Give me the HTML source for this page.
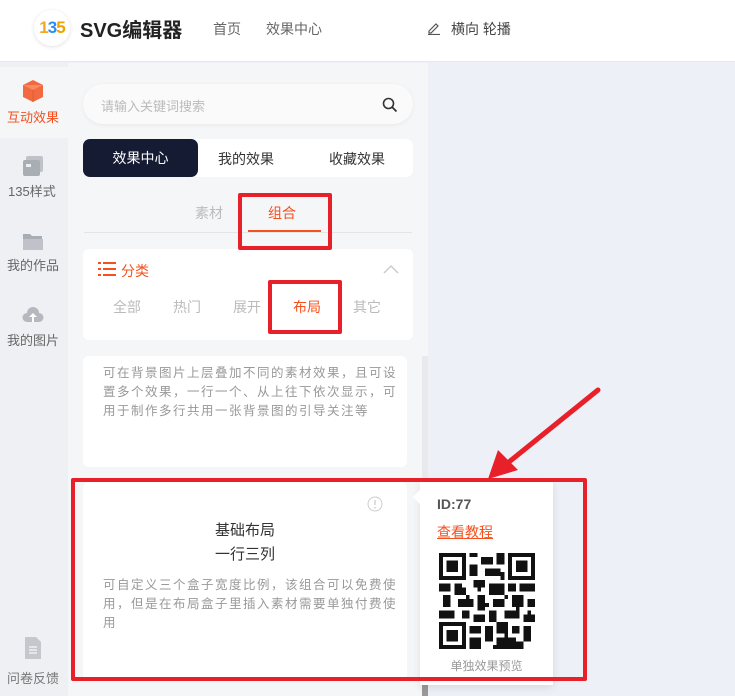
<!DOCTYPE html>
<html><head><meta charset="utf-8"><style>
*{margin:0;padding:0;box-sizing:border-box}
body{width:735px;height:696px;overflow:hidden;font-family:"Liberation Sans","Noto Sans CJK SC",sans-serif;background:#edf0f6;position:relative}
.a{position:absolute}
.d{font-size:12.5px;line-height:19px;color:#999;letter-spacing:1.5px;width:300px}
</style></head><body>
<!-- header -->
<div class="a" style="left:0;top:0;width:735px;height:62px;background:#fff;border-bottom:1px solid #e6e9ef"></div>
<div class="a" style="left:34px;top:10px;width:36px;height:36px;border-radius:50%;background:#fff;box-shadow:0 1px 4px rgba(0,0,0,.12);font:bold 17px 'Liberation Sans',sans-serif;text-align:center;line-height:36px;letter-spacing:-1px"><span style="color:#f5a623">1</span><span style="color:#2c8df0">3</span><span style="color:#f0a300">5</span></div>
<div class="a" style="left:80px;top:14px;font-size:20px;font-weight:bold;color:#222">SVG编辑器</div>
<div class="a" style="left:213px;top:19px;font-size:14px;color:#666">首页</div>
<div class="a" style="left:266px;top:19px;font-size:14px;color:#666">效果中心</div>
<svg class="a" style="left:427px;top:21px" width="14" height="14" viewBox="0 0 14 14"><path d="M2 10 L9 3 L11 5 L4 12 L2 12Z" fill="none" stroke="#555" stroke-width="1.2"/><path d="M1 13.5H13" stroke="#555" stroke-width="1.2"/></svg>
<div class="a" style="left:451px;top:19px;font-size:14px;color:#444">横向 轮播</div>
<!-- sidebar -->
<div class="a" style="left:0;top:63px;width:68px;height:633px;background:#eef0f3"></div>
<div class="a" style="left:0;top:67px;width:68px;height:71px;background:#f5f6f8"></div>
<svg class="a" style="left:22px;top:79px" width="22" height="24" viewBox="0 0 22 24"><path d="M11 1L21 6V18L11 23L1 18V6Z" fill="#f26a3f"/><path d="M1 6L11 11L21 6" fill="#fa8a5f"/><path d="M11 11V23" stroke="#e05a30"/></svg>
<div class="a" style="left:7px;top:107px;font-size:13px;color:#f4511e">互动效果</div>
<svg class="a" style="left:22px;top:155px" width="22" height="22"><rect x="4" y="1" width="17" height="16" rx="2" fill="#bfc3c9"/><rect x="1" y="5" width="17" height="16" rx="2" fill="#a9adb4"/><rect x="4" y="9" width="5" height="3" fill="#eee"/></svg>
<div class="a" style="left:8px;top:181px;font-size:13px;color:#666">135样式</div>
<svg class="a" style="left:22px;top:231px" width="22" height="20"><path d="M1 3h7l2 2h10v14H1Z" fill="#a9adb4"/><path d="M1 8h20v11H1Z" fill="#bfc3c9"/></svg>
<div class="a" style="left:7px;top:255px;font-size:13px;color:#666">我的作品</div>
<svg class="a" style="left:22px;top:306px" width="22" height="18"><path d="M5 16a4.5 4.5 0 0 1 0-9 6 6 0 0 1 12 0 4.5 4.5 0 0 1 0 9Z" fill="#b5b9bf"/><path d="M11 7l-4 4h3v5h2v-5h3Z" fill="#fff"/></svg>
<div class="a" style="left:7px;top:330px;font-size:13px;color:#666">我的图片</div>
<svg class="a" style="left:23px;top:636px" width="20" height="24"><path d="M2 1h11l5 5v17H2Z" fill="#c4c7cc"/><path d="M6 11h8M6 14h8M6 17h8" stroke="#eef0f3" stroke-width="1.5"/></svg>
<div class="a" style="left:7px;top:668px;font-size:13px;color:#777">问卷反馈</div>
<!-- middle -->
<div class="a" style="left:68px;top:63px;width:360px;height:633px;background:#f5f6f8"></div>
<div class="a" style="left:83px;top:84px;width:330px;height:40px;border-radius:20px;background:#fafafb;box-shadow:0 1px 4px rgba(0,0,0,.06)"></div>
<div class="a" style="left:101px;top:96px;font-size:13px;color:#bbb">请输入关键词搜索</div>
<svg class="a" style="left:382px;top:97px" width="16" height="16"><circle cx="6.5" cy="6.5" r="5" fill="none" stroke="#333" stroke-width="1.6"/><path d="M10 10l4.5 4.5" stroke="#333" stroke-width="1.8"/></svg>
<div class="a" style="left:83px;top:139px;width:330px;height:38px;border-radius:7px;background:#fff"></div>
<div class="a" style="left:83px;top:139px;width:115px;height:38px;border-radius:7px;background:#151b33;color:#fff;font-size:14px;text-align:center;line-height:38px">效果中心</div>
<div class="a" style="left:218px;top:149px;font-size:14px;color:#333">我的效果</div>
<div class="a" style="left:329px;top:149px;font-size:14px;color:#333">收藏效果</div>
<div class="a" style="left:195px;top:203px;font-size:14px;color:#bbb">素材</div>
<div class="a" style="left:268px;top:203px;font-size:14px;color:#f4511e">组合</div>
<div class="a" style="left:84px;top:232px;width:328px;height:1px;background:#e3e5e9"></div>
<div class="a" style="left:248px;top:230px;width:73px;height:2px;background:#f4511e"></div>
<div class="a" style="left:83px;top:249px;width:330px;height:91px;border-radius:6px;background:#fff"></div>
<svg class="a" style="left:98px;top:262px" width="18" height="14"><g fill="#f4511e"><rect x="0" y="0" width="3" height="2"/><rect x="5" y="0" width="13" height="2"/><rect x="0" y="6" width="3" height="2"/><rect x="5" y="6" width="13" height="2"/><rect x="0" y="12" width="3" height="2"/><rect x="5" y="12" width="13" height="2"/></g></svg>
<div class="a" style="left:121px;top:261px;font-size:14px;color:#f4511e">分类</div>
<svg class="a" style="left:383px;top:264px" width="16" height="10"><path d="M1 9l7-7 7 7" fill="none" stroke="#ccc" stroke-width="1.5"/></svg>
<div class="a" style="left:113px;top:297px;font-size:14px;color:#bbb">全部</div>
<div class="a" style="left:173px;top:297px;font-size:14px;color:#bbb">热门</div>
<div class="a" style="left:233px;top:297px;font-size:14px;color:#bbb">展开</div>
<div class="a" style="left:293px;top:297px;font-size:14px;color:#f4511e">布局</div>
<div class="a" style="left:353px;top:297px;font-size:14px;color:#bbb">其它</div>
<!-- card 1 -->
<div class="a" style="left:83px;top:356px;width:324px;height:111px;border-radius:6px;background:#fff"></div>
<div class="a d" style="left:103px;top:364px">可在背景图片上层叠加不同的素材效果，且可设置多个效果，一行一个、从上往下依次显示，可用于制作多行共用一张背景图的引导关注等</div>
<div class="a" style="left:422px;top:356px;width:6px;height:340px;background:#e8e9ec"></div>
<div class="a" style="left:422px;top:680px;width:6px;height:16px;background:#999"></div>
<!-- card 2 -->
<div class="a" style="left:83px;top:482px;width:324px;height:198px;border-radius:6px;background:#fff"></div>
<svg class="a" style="left:367px;top:496px" width="16" height="16"><circle cx="8" cy="8" r="7" fill="none" stroke="#ccc"/><path d="M8 4v5M8 11v1.5" stroke="#ccc" stroke-width="1.3"/></svg>
<div class="a" style="left:83px;top:519px;width:324px;text-align:center;font-size:15px;line-height:24px;color:#333">基础布局<br>一行三列</div>
<div class="a d" style="left:103px;top:576px">可自定义三个盒子宽度比例，该组合可以免费使用，但是在布局盒子里插入素材需要单独付费使用</div>
<!-- popup -->
<div class="a" style="left:420px;top:482px;width:133px;height:203px;background:#fff;box-shadow:0 2px 8px rgba(0,0,0,.1)"></div>
<div class="a" style="left:415px;top:492px;width:10px;height:10px;background:#fff;transform:rotate(45deg)"></div>
<div class="a" style="left:437px;top:496px;font-size:14px;font-weight:bold;color:#555">ID:77</div>
<div class="a" style="left:437px;top:522px;font-size:14px;color:#f4511e;text-decoration:underline">查看教程</div>
<svg class="a" style="left:439px;top:553px" width="96" height="96" viewBox="0 0 25 25" shape-rendering="crispEdges"><g fill="#111">
<path d="M0 0h7v7H0Z M1 1v5h5V1Z M2 2h3v3H2Z" fill-rule="evenodd"/>
<path d="M18 0h7v7h-7Z M19 1v5h5V1Z M20 2h3v3h-3Z" fill-rule="evenodd"/>
<path d="M0 18h7v7H0Z M1 19v5h5v-5Z M2 20h3v3H2Z" fill-rule="evenodd"/>
<rect x="8" y="0" width="2" height="1"/><rect x="11" y="1" width="3" height="2"/><rect x="15" y="0" width="2" height="3"/><rect x="8" y="3" width="2" height="3"/><rect x="12" y="4" width="4" height="2"/><rect x="9" y="7" width="3" height="2"/>
<rect x="0" y="8" width="3" height="2"/><rect x="4" y="9" width="3" height="2"/><rect x="13" y="8" width="4" height="3"/><rect x="18" y="8" width="2" height="2"/><rect x="21" y="8" width="4" height="2"/>
<rect x="1" y="11" width="2" height="3"/><rect x="5" y="12" width="4" height="2"/><rect x="10" y="11" width="2" height="4"/><rect x="14" y="12" width="3" height="2"/><rect x="19" y="11" width="3" height="3"/><rect x="23" y="12" width="2" height="2"/>
<rect x="0" y="15" width="4" height="2"/><rect x="6" y="15" width="2" height="2"/><rect x="9" y="16" width="3" height="2"/><rect x="13" y="15" width="2" height="3"/><rect x="17" y="15" width="4" height="2"/><rect x="22" y="16" width="3" height="2"/>
<rect x="8" y="19" width="3" height="2"/><rect x="12" y="19" width="2" height="4"/><rect x="15" y="18" width="3" height="3"/><rect x="19" y="19" width="2" height="2"/><rect x="22" y="19" width="2" height="4"/>
<rect x="8" y="22" width="3" height="3"/><rect x="15" y="22" width="5" height="3"/><rect x="20" y="23" width="2" height="2"/><rect x="16" y="5" width="1" height="2"/><rect x="4" y="8" width="2" height="1"/>
<rect x="10" y="9" width="1" height="1"/><rect x="7" y="11" width="1" height="1"/><rect x="17" y="11" width="1" height="1"/><rect x="2" y="16" width="1" height="1"/><rect x="11" y="13" width="2" height="1"/><rect x="20" y="14" width="1" height="1"/><rect x="9" y="20" width="1" height="1"/><rect x="14" y="24" width="1" height="1"/><rect x="23" y="15" width="1" height="1"/><rect x="17" y="21" width="1" height="1"/>
</g></svg>
<div class="a" style="left:420px;top:657px;width:133px;text-align:center;font-size:12px;color:#999">单独效果预览</div>
<!-- red annotations -->
<div class="a" style="left:238px;top:193px;width:94px;height:57px;border:4px solid #e8202a;border-radius:2px"></div>
<div class="a" style="left:268px;top:280px;width:74px;height:54px;border:4px solid #e8202a;border-radius:2px"></div>
<div class="a" style="left:71px;top:478px;width:516px;height:203px;border:4px solid #e8202a;border-radius:2px"></div>
<svg class="a" style="left:480px;top:380px" width="130" height="110"><path d="M118 10L24 86" stroke="#e8202a" stroke-width="5" stroke-linecap="round"/><path d="M8 99L18 70L38 90Z" fill="#e8202a"/></svg>
</body></html>
